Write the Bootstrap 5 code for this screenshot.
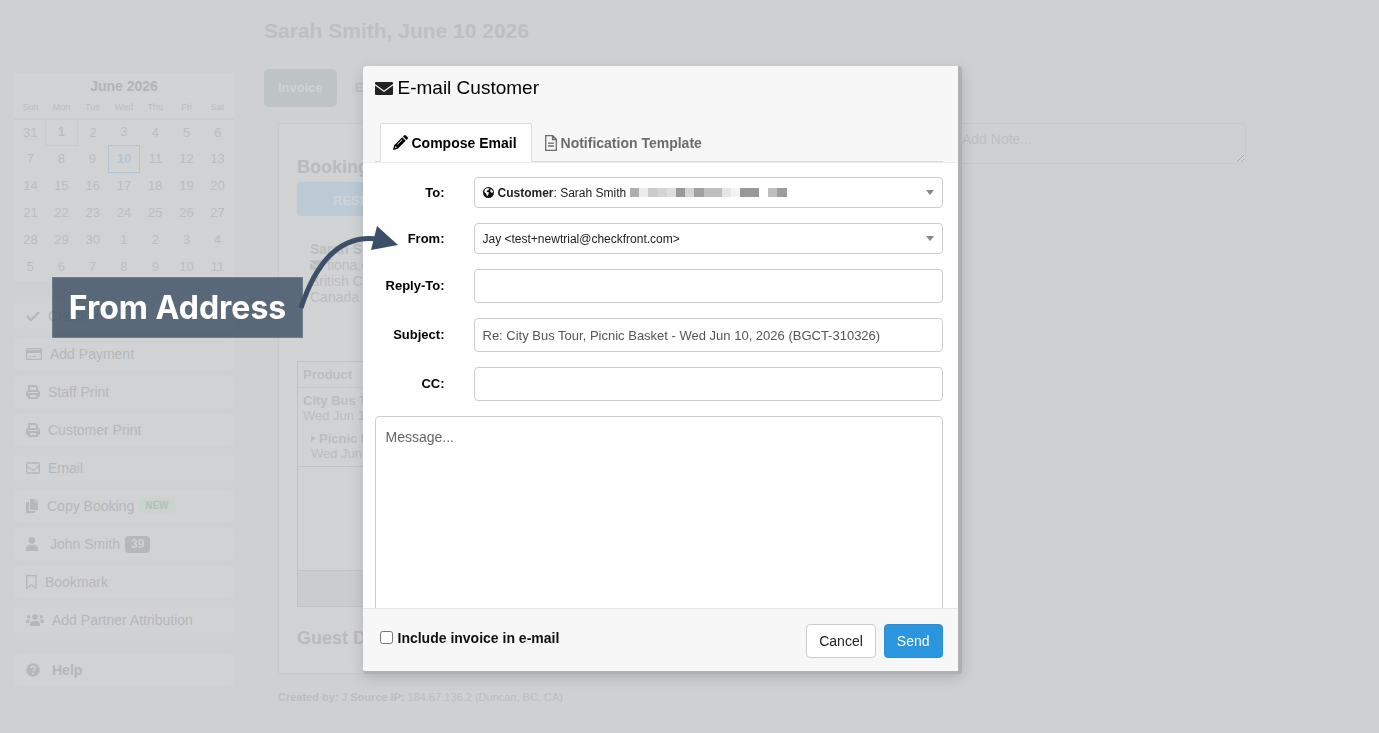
<!DOCTYPE html>
<html lang="en">
<head>
<meta charset="utf-8">
<meta name="viewport" content="width=device-width, initial-scale=1">
<title>E-mail Customer</title>
<link href="https://cdn.jsdelivr.net/npm/bootstrap@5.3.0/dist/css/bootstrap.min.css" rel="stylesheet">
<script src="https://cdn.jsdelivr.net/npm/bootstrap@5.3.0/dist/js/bootstrap.bundle.min.js" defer></script>
<style>
  body { background: #cfd0d2; color: #bcbdbf; font-family: "Liberation Sans", Arial, sans-serif; font-size: 14px; line-height: 16px; min-height: 100vh; overflow: hidden; }
  svg { display: block; flex: none; fill: currentColor; }

  /* Sidebar */
  .side { width: 248px; padding: 74px 14px 0; }
  .cal { border: 1px solid #d3d4d6; background: #d1d2d4; table-layout: fixed; width: 100%; text-align: center; }
  .cal caption { caption-side: top; padding: 0; height: 22px; line-height: 22px; font-size: 14px; font-weight: bold; color: #b3b4b6; text-align: center; background: #d1d2d4; border: 1px solid #d3d4d6; }
  .cal th { height: 22px; font-size: 9px; font-weight: normal; border-bottom: 2px solid #cbccce; }
  .cal td { height: 27px; font-size: 13px; padding: 0; }
  .cal .today { border: 1px solid #c8c9cb; font-weight: bold; }
  .cal .picked { border: 1px solid #b3c5d5; color: #b3c5d5; font-weight: bold; }
  .side-nav { display: grid; row-gap: 6px; margin-top: 19px; }
  .side-link { display: flex; align-items: center; gap: 8px; height: 32px; padding: 0 12px; background: #d1d2d4; border-radius: 4px; color: #b6b7b9; text-decoration: none; }
  .side-link.help { margin-top: 12px; font-weight: bold; }
  .tag-new { background: #cbd3cf; color: #aec2b7; font-size: 10px; font-weight: bold; padding: 0 6px; border-radius: 3px; margin-left: -3px; }
  .tag-count { background: #b6b7b9; color: #d0d1d3; font-size: 12px; font-weight: bold; padding: 0 6px; line-height: 17px; border-radius: 4px; margin-left: -3px; }

  /* Booking page */
  .page-title { font-size: 21px; line-height: 26px; font-weight: bold; color: #bebfc1; margin: 18px 0 25px; }
  .page-tab { border: 0; background: none; height: 38px; padding: 0 14px; border-radius: 5px; color: #bebfc1; font-size: 13px; font-weight: bold; }
  .page-tab.active { background: #bec3c6; color: #cfd2d4; }
  .panel { flex: 0 1 656px; min-width: 0; border: 1px solid #c8c9cb; background: #d1d2d4; padding: 32px 18px 24px; margin-left: 14px; }
  .panel h2 { font-size: 18px; line-height: 22px; font-weight: bold; color: #b9babc; margin: 0; }
  .status { width: 100%; height: 34px; padding: 4px 0 0 36px; margin-top: 4px; text-align: left; border: 0; border-radius: 4px; background: #bccad5; color: #cdd4d9; font-size: 13px; font-weight: bold; }
  .address { margin: 25px 13px 56px; }
  .items { width: 100%; border: 1px solid #c2c3c5; font-size: 13px; line-height: 15px; }
  .items th { height: 26px; padding: 0 5px; border-bottom: 1px solid #c5c6c8; }
  .items td { padding: 5px; border-bottom: 1px solid #c2c3c5; }
  .items .space td { height: 104px; }
  .items tfoot td { height: 36px; background: #cbccce; }
  .note { width: 296px; height: 41px; border: 1px solid #b9babc; border-radius: 4px; background: none; padding: 7px 11px; opacity: .3; }
  .note::placeholder { color: #979899; }
  .made { font-size: 11px; margin: 15px 0 0 14px; }

  /* Dialog */
  .modal { padding-right: 55px; }
  .modal-dialog { --bs-modal-width: 599px; margin-top: 66px; margin-bottom: 59px; height: calc(100vh - 125px); }
  .modal-content { color: #111; border: solid #aeb0b3; border-width: 0 4px 3px 0; border-radius: 4px; box-shadow: 0 4px 14px rgba(0,0,0,.15); height: 100%; }
  .modal-header { background: #f7f7f7; border-bottom: 1px solid #ececec; border-radius: 4px 0 0 0; padding: 12px 15px 0 12px; }
  .modal-title { font-size: 19px; line-height: 20px; font-weight: normal; color: #000; gap: 5px; }
  .nav-tabs { margin-top: 25px; padding-left: 5px; border-bottom: 1px solid #dcdcdc; }
  .nav-tabs .nav-link { display: flex; align-items: center; gap: 4px; height: 39px; padding: 0 12px; border-radius: 3px 3px 0 0; font-size: 14px; font-weight: bold; color: #6c6c6c; }
  .nav-tabs .nav-link.active { color: #000; border-color: #ddd #ddd #fff; padding-right: 14px; }
  .modal-body { padding: 14px 15px 0 12px; overflow: hidden !important; }
  .fields { display: grid; grid-template-columns: 70px 1fr; column-gap: 29px; row-gap: 15px; align-items: center; }
  .fields label { text-align: right; font-size: 13px; font-weight: bold; color: #000; }
  .form-control, .form-select { border: 1px solid #ccc; border-radius: 4px; }
  .form-control { font-size: 13px; line-height: 20px; height: 34px; padding: 6px 8px; color: #555; }
  .form-select { height: 31px; padding: 0 28px 0 8px; font-size: 12px; color: #222; background-image: url("data:image/svg+xml,%3Csvg xmlns='http://www.w3.org/2000/svg' viewBox='0 0 8 5'%3E%3Cpath d='M0 0h8L4 5z' fill='%23888'/%3E%3C/svg%3E"); background-size: 8px 5px; background-position: right 8px center; }
  .form-select.quiet { color: transparent; }
  .chosen { position: absolute; inset: 0 30px 0 9px; display: flex; align-items: center; font-size: 12px; color: #222; pointer-events: none; }
  .message { height: 260px; margin-top: 15px; padding: 10px; font-size: 14px; resize: none; }
  .message::placeholder { color: #666; }
  .modal-footer { height: 63px; flex: none; padding: 2px 15px 0 17px; background: #f7f7f7; border-top: 1px solid #e5e5e5; border-radius: 0 0 0 4px; }
  .modal-footer > * { margin: 0; }
  .check { display: flex; align-items: center; gap: 5px; font-size: 14px; font-weight: bold; color: #111; padding-bottom: 7px; }
  .check input { width: 13px; height: 13px; margin: 0; }
  .modal-footer .btn { height: 34px; padding: 0 12px; font-size: 14px; border-radius: 4px; }
  .btn-plain { background: #fff; border-color: #ccc; color: #222; }
  .btn-send { background: #2b95de; border-color: #2b8fd6; color: #fff; }

  /* Annotation over the page */
  .callout { position: absolute; z-index: 1100; left: 52px; top: 277px; width: 251px; height: 61px; display: flex; align-items: center; justify-content: center; background: rgba(60,80,100,.81); border: 1px solid rgba(130,145,160,.5); color: #fff; font: 700 32px/36px Inter, sans-serif; white-space: nowrap; }
  .pointer { position: absolute; z-index: 1101; left: 296px; top: 220px; }
</style>
</head>
<body>
<div class="d-flex">
  <aside class="side flex-shrink-0">
    <table class="cal">
      <caption>June 2026</caption>
      <thead><tr><th>Sun</th><th>Mon</th><th>Tue</th><th>Wed</th><th>Thu</th><th>Fri</th><th>Sat</th></tr></thead>
      <tbody>
        <tr><td>31</td><td class="today">1</td><td>2</td><td>3</td><td>4</td><td>5</td><td>6</td></tr>
        <tr><td>7</td><td>8</td><td>9</td><td class="picked">10</td><td>11</td><td>12</td><td>13</td></tr>
        <tr><td>14</td><td>15</td><td>16</td><td>17</td><td>18</td><td>19</td><td>20</td></tr>
        <tr><td>21</td><td>22</td><td>23</td><td>24</td><td>25</td><td>26</td><td>27</td></tr>
        <tr><td>28</td><td>29</td><td>30</td><td>1</td><td>2</td><td>3</td><td>4</td></tr>
        <tr><td>5</td><td>6</td><td>7</td><td>8</td><td>9</td><td>10</td><td>11</td></tr>
      </tbody>
    </table>
    <nav class="side-nav">
      <a class="side-link" href="#"><svg width="14" height="14" viewBox="0 0 14 14"><path d="M1 7l4 4 8-8" fill="none" stroke="currentColor" stroke-width="2.4"/></svg>Check-in</a>
      <a class="side-link" href="#"><svg width="16" height="14" viewBox="0 0 16 14"><path d="M1.500 1h13A1.500 1.500 0 0 1 16 2.500v9a1.500 1.500 0 0 1-1.500 1.500h-13A1.500 1.500 0 0 1 0 11.500v-9A1.500 1.500 0 0 1 1.500 1zM1.300 2.300v1h13.400v-1zM1.300 6v5.700h13.400V6zM3 9h2v1H3zm3.500 0H10v1H6.500z" fill-rule="evenodd"/></svg>Add Payment</a>
      <a class="side-link" href="#"><svg width="14" height="14" viewBox="0 0 14 14"><path d="M3 6V1h6.500L11 2.500V6M3 10.500H1V7.200Q1 6 2.200 6h9.600Q13 6 13 7.200v3.300h-2M3 9h8v4.200H3z" fill="none" stroke="currentColor" stroke-width="1.900"/></svg>Staff Print</a>
      <a class="side-link" href="#"><svg width="14" height="14" viewBox="0 0 14 14"><path d="M3 6V1h6.500L11 2.500V6M3 10.500H1V7.200Q1 6 2.200 6h9.600Q13 6 13 7.200v3.300h-2M3 9h8v4.200H3z" fill="none" stroke="currentColor" stroke-width="1.900"/></svg>Customer Print</a>
      <a class="side-link" href="#"><svg width="14" height="14" viewBox="0 0 14 14"><path d="M1.700 2h10.600q1 0 1 1v8q0 1-1 1H1.700q-1 0-1-1V3q0-1 1-1zM.7 5q5 4 6.300 4t6.300-4" fill="none" stroke="currentColor" stroke-width="1.300"/></svg>Email</a>
      <a class="side-link" href="#"><svg width="13" height="14" viewBox="0 0 13 14"><path d="M4 0h4.500v3.500H12V11H4zM9.300 0L12 2.700H9.300zM0 3h3v9h6v2H0z"/></svg>Copy Booking <span class="tag-new">NEW</span></a>
      <a class="side-link" href="#"><svg width="16" height="14" viewBox="0 0 16 14"><circle cx="6" cy="3.500" r="3.300"/><path d="M0 14v-2q0-4 3.500-4h5Q12 8 12 12v2z"/></svg>John Smith <span class="tag-count">39</span></a>
      <a class="side-link" href="#"><svg width="11" height="14" viewBox="0 0 11 14"><path d="M.7.700h9.300v12.500L5.300 9.800.7 13.200z" fill="none" stroke="currentColor" stroke-width="1.300"/></svg>Bookmark</a>
      <a class="side-link" href="#"><svg width="18" height="14" viewBox="0 0 18 14"><circle cx="9" cy="4" r="2.800"/><circle cx="2.600" cy="3.800" r="1.700"/><circle cx="15.400" cy="3.800" r="1.700"/><path d="M4 13v-1.500Q4 8 7 8h4q3 0 3 3.500V13zM0 10V8.500Q0 6.500 2 6.500h2.500Q3 7.800 3 10zM18 10V8.500q0-2-2-2h-2.500Q15 7.800 15 10z"/></svg>Add Partner Attribution</a>
      <a class="side-link help" href="#"><svg width="18" height="14" viewBox="0 0 18 14"><circle cx="7" cy="7" r="6.800"/><path d="M4.700 5q.6-1.800 2.400-1.700 2.200.2 2.100 1.900 0 1-1.200 1.600-1 .5-1 1.500" fill="none" stroke="#d1d2d4" stroke-width="1.500"/><circle cx="7" cy="10.500" r="1" fill="#d1d2d4"/></svg>Help</a>
    </nav>
  </aside>

  <main class="flex-grow-1 ps-3">
    <h1 class="page-title">Sarah Smith, June 10 2026</h1>
    <div class="d-flex gap-1"><button type="button" class="page-tab active">Invoice</button><button type="button" class="page-tab">Email</button></div>
    <div class="d-flex gap-3 align-items-start mt-3">
      <section class="panel">
        <h2>Booking</h2>
        <button type="button" class="status">RESERVED</button>
        <div class="address">
          <b>Sarah Smith</b>
          <div class="d-flex align-items-center gap-1"><svg width="13" height="10" viewBox="0 0 18 13"><path d="M0 0h18v1L9 8 0 1zM0 3l9 7 9-7v10H0z"/></svg>fiona.c</div>
          British Co<br>Canada
        </div>
        <table class="items">
          <thead><tr><th>Product</th></tr></thead>
          <tbody>
            <tr><td><b>City Bus Tour</b><br>Wed Jun 10, 2026
              <div class="d-flex gap-1 ps-2 pt-2"><svg width="4" height="15" viewBox="0 0 4 15"><path d="M0 4l4 3.500L0 11z"/></svg><b>Picnic Basket</b></div>
              <div class="ps-2">Wed Jun 10, 2026</div></td></tr>
            <tr class="space"><td></td></tr>
          </tbody>
          <tfoot><tr><td></td></tr></tfoot>
        </table>
        <h2 class="pt-3 mt-1">Guest D</h2>
      </section>
      <textarea class="note" placeholder="Add Note..." aria-label="Add Note"></textarea>
    </div>
    <p class="made"><b>Created by:</b> J <b>Source IP:</b> 184.67.136.2 (Duncan, BC, CA)</p>
  </main>
</div>

<div class="modal d-block" tabindex="-1" role="dialog" aria-labelledby="dialog-title">
  <div class="modal-dialog modal-dialog-scrollable">
    <form class="modal-content">
      <header class="modal-header d-block">
        <h2 class="modal-title d-flex align-items-center" id="dialog-title"><svg width="18" height="13" viewBox="0 0 18 13" fill="#222"><path fill="#222" d="M1 0h16q1 0 1 1v1L9 8.500 0 2V1q0-1 1-1zM0 3.500L9 10l9-6.500V12q0 1-1 1H1q-1 0-1-1z"/></svg>E-mail Customer</h2>
        <ul class="nav nav-tabs">
          <li class="nav-item"><a class="nav-link active" href="#"><svg width="15" height="15" viewBox="0 0 15 15"><path d="M10 1.500L11 .5q1-1 2 0L14.500 2q1 1 0 2l-1 1zM9.200 2.300l3.500 3.500-8 8L0 15l1.200-4.700zM2.500 11l-.6 2.100 2.100-.6zM9 4.300l-5 5 .5.5 5-5z" fill-rule="evenodd"/></svg>Compose Email</a></li>
          <li class="nav-item"><a class="nav-link" href="#"><svg width="12" height="16" viewBox="0 0 12 16"><path d="M.7.700h7l3.600 3.600v11H.7zM7.500.7v3.800h3.800M3 8.200h6M3 11h6" fill="none" stroke="currentColor" stroke-width="1.300"/></svg>Notification Template</a></li>
        </ul>
      </header>
      <div class="modal-body">
        <div class="fields">
          <label for="to">To:</label>
          <div class="position-relative">
            <select class="form-select quiet" id="to"><option>Customer: Sarah Smith</option></select>
            <div class="chosen" aria-hidden="true"><svg class="me-1" width="11" height="11" viewBox="0 0 12 12"><circle cx="6" cy="6" r="6" fill="#111"/><path d="M2 2.500L5 1l2 .7-1 1.500-2 .8.500 1.500 2 .5-.5 2L4.500 10 3.500 7.500 1.500 5.500zM8 2.500l2 .5 1 2.500-1.500 1L8 5z" fill="#fff"/></svg><b>Customer</b>: Sarah Smith
              <svg class="ms-1" width="157" height="9" viewBox="0 0 157 9" shape-rendering="crispEdges"><path fill="#aeaeae" d="M0 0h9v9H0z"/><path fill="#ebebeb" d="M9 0h9v9H9z"/><path fill="#cbcbcb" d="M18 0h10v9H18z"/><path fill="#d4d4d4" d="M28 0h9v9h-9z"/><path fill="#dedede" d="M37 0h9v9h-9z"/><path fill="#999" d="M46 0h9v9h-9z"/><path fill="#d4d4d4" d="M55 0h9v9h-9z"/><path fill="#a0a0a0" d="M64 0h10v9H64z"/><path fill="#bfbfbf" d="M74 0h18v9H74z"/><path fill="#e6e6e6" d="M92 0h9v9h-9z"/><path fill="#f3f3f3" d="M101 0h9v9h-9z"/><path fill="#999" d="M110 0h19v9h-19z"/><path fill="#bfbfbf" d="M138 0h9v9h-9z"/><path fill="#9c9c9c" d="M147 0h10v9h-10z"/></svg></div>
          </div>
          <label for="from">From:</label>
          <select class="form-select" id="from"><option>Jay &lt;test+newtrial@checkfront.com&gt;</option></select>
          <label for="reply">Reply-To:</label>
          <input class="form-control" id="reply" type="text">
          <label for="subject">Subject:</label>
          <input class="form-control" id="subject" type="text" value="Re: City Bus Tour, Picnic Basket - Wed Jun 10, 2026 (BGCT-310326)">
          <label for="cc">CC:</label>
          <input class="form-control" id="cc" type="text">
        </div>
        <textarea class="form-control message" placeholder="Message..." aria-label="Message"></textarea>
      </div>
      <footer class="modal-footer justify-content-between">
        <label class="check" for="inc"><input type="checkbox" id="inc">Include invoice in e-mail</label>
        <div class="d-flex gap-2"><button type="button" class="btn btn-plain">Cancel</button><button type="button" class="btn btn-send">Send</button></div>
      </footer>
    </form>
  </div>
</div>

<div class="callout">From Address</div>
<svg class="pointer" width="104" height="92" viewBox="0 0 104 92"><path d="M5 88C20 42 44 14 82 19" fill="none" stroke="#3b5068" stroke-width="5"/><path d="M81 6l21 19-27 5z" fill="#3b5068"/></svg>
</body>
</html>
